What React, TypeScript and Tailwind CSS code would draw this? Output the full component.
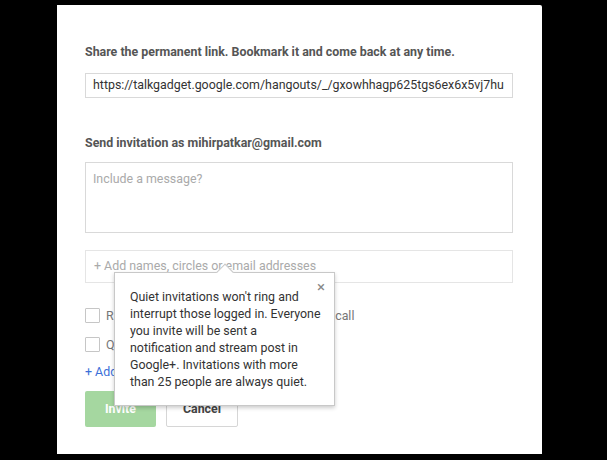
import React from 'react';

const font = { fontFamily: 'Roboto, "Liberation Sans", sans-serif' };

const tipLines = [
  "Quiet invitations won't ring and",
  'interrupt those logged in. Everyone',
  'you invite will be sent a',
  'notification and stream post in',
  'Google+. Invitations with more',
  'than 25 people are always quiet.',
];

function Checkbox() {
  return <span className="inline-block h-[15px] w-[15px] shrink-0 rounded-[1px] border border-[#c6c6c6] bg-white" />;
}

function QuietTip() {
  return (
    <div className="absolute left-[57px] top-[267px] w-[221px] h-[134px] border border-[#c8c8c8] bg-white shadow-[0_2px_4px_rgba(0,0,0,0.2)]">
      {/* arrow */}
      <div className="absolute -top-[7px] left-[104px] h-[12px] w-[12px] rotate-45 border-l border-t border-[#c8c8c8] bg-white" />
      <button className="absolute right-[9px] top-[7px] text-[15px] leading-none text-[#888]">×</button>
      <p className="pl-[15px] pt-[15px] text-[12.4px] leading-[17px] text-[#333] whitespace-nowrap">
        {tipLines.map(l => <span key={l} className="block">{l}</span>)}
      </p>
    </div>
  );
}

export default function App() {
  return (
    <div className="h-[460px] w-[607px] overflow-hidden bg-black pt-[5px] pl-[57px]" style={font}>
      <div className="relative h-[449px] w-[485px] rounded-tr-[2px] bg-white pl-[28px] pr-[29px] pt-[39px]">
        <div className="text-[12.4px] font-bold leading-[16px] text-[#555]">
          Share the permanent link. Bookmark it and come back at any time.
        </div>
        <div className="mt-[13px] flex h-[25px] items-center border border-[#d9d9d9] px-[7px] text-[12.4px] text-[#333] whitespace-nowrap overflow-hidden">
          https://talkgadget.google.com/hangouts/_/gxowhhagp625tgs6ex6x5vj7hu
        </div>

        <div className="mt-[37px] text-[12.4px] font-bold leading-[16px] text-[#555]">
          Send invitation as mihirpatkar@gmail.com
        </div>
        <div className="mt-[11px] h-[71px] border border-[#d9d9d9] px-[7px] pt-[8px] text-[12.4px] leading-[16px] text-[#aaa]">
          Include a message?
        </div>
        <div className="mt-[17px] flex h-[33px] items-center border border-[#e5e5e5] px-[8px] text-[12.4px] text-[#aaa]">
          + Add names, circles or email addresses
        </div>

        <div className="mt-[25px] flex items-center gap-[6px] text-[12.4px] leading-[15px] text-[#777]">
          <Checkbox />
          <span>Ring all invitees when you start this video call</span>
        </div>
        <div className="mt-[14px] flex items-center gap-[6px] text-[12.4px] leading-[15px] text-[#777]">
          <Checkbox />
          <span>Quiet invitations</span>
        </div>
        <div className="mt-[12px] text-[12.4px] leading-[16px] text-[#3a6fd8]">+ Add more people</div>

        <div className="mt-[11px] flex gap-[10px]">
          <button className="h-[36px] w-[71px] rounded-[2px] bg-[#a5d7a0] text-[12.4px] font-bold text-white">Invite</button>
          <button className="h-[36px] w-[72px] rounded-[2px] border border-[#d6d6d6] bg-white text-[12.4px] font-bold text-[#444]">Cancel</button>
        </div>

        <QuietTip />
      </div>
    </div>
  );
}
